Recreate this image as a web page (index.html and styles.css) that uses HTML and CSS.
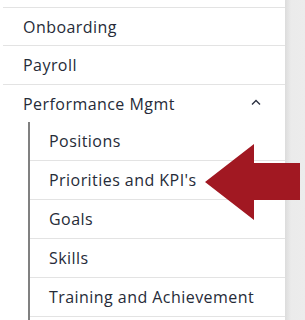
FILE: index.html
```html
<!DOCTYPE html>
<html lang="en">
<head>
    <meta charset="UTF-8">
    <meta name="viewport" content="width=device-width, initial-scale=1.0">
    <title>Menu</title>
    <link rel="stylesheet" href="styles.css">
</head>
<body>
    <div class="layout">
        <nav class="sidebar">
            <ul class="menu">
                <li class="item"><a href="#">Onboarding</a></li>
                <li class="item"><a href="#">Payroll</a></li>
                <li class="item open">
                    <a href="#" class="toggle">Performance Mgmt
                        <svg class="chev" width="10" height="6" viewBox="0 0 10 6"><path d="M1 5.5 L5 1.5 L9 5.5" fill="none" stroke="#2b3040" stroke-width="1.4"/></svg>
                    </a>
                    <ul class="submenu">
                        <li><a href="#">Positions</a></li>
                        <li><a href="#">Priorities and KPI's</a></li>
                        <li><a href="#">Goals</a></li>
                        <li><a href="#">Skills</a></li>
                        <li><a href="#">Training and Achievement</a></li>
                        <li><a href="#">&nbsp;</a></li>
                    </ul>
                </li>
            </ul>
        </nav>
        <div class="gutter"></div>
    </div>
    <svg class="arrow" width="96" height="76" viewBox="0 0 96 76">
        <polygon points="0,38 49,0 49,19 95,19 95,56 49,56 49,76" fill="#a11822"/>
    </svg>
</body>
</html>
```

FILE: styles.css
```css
body {
    margin: 0;
    font-family: 'Open Sans', sans-serif;
    color: #262b38;
    background: #fff;
    overflow: hidden;
}
.layout {
    display: flex;
    height: 320px;
    overflow: hidden;
}
.sidebar {
    width: 282px;
    margin-left: 3px;
    background: #fff;
}
.gutter {
    flex: 1;
    background: linear-gradient(to right, #dcdcdc, #ebebeb 6px, #ececec);
}
.menu, .submenu {
    list-style: none;
    margin: 0;
    padding: 0;
}
.menu {
    border-top: 1px solid #e3e3e3;
    margin-top: 7px;
}
.item > a {
    display: flex;
    align-items: center;
    justify-content: space-between;
    height: 37px;
    padding: 0 24px 0 20px;
    border-bottom: 1px solid #e3e3e3;
    color: inherit;
    text-decoration: none;
    font-size: 16px;
    letter-spacing: 0.45px;
}
.item:nth-child(2) > a {
    height: 38px;
}
.item.open > a {
    border-bottom: none;
}
.chev {
    margin-top: -4px;
}
.submenu {
    margin-left: 25px;
    border-left: 2px solid #808080;
}
.submenu li a {
    display: flex;
    align-items: center;
    height: 38px;
    padding-left: 19px;
    border-bottom: 1px solid #e3e3e3;
    color: inherit;
    text-decoration: none;
    font-size: 16px;
    letter-spacing: 0.45px;
}
.arrow {
    position: absolute;
    left: 205px;
    top: 144px;
}
```
